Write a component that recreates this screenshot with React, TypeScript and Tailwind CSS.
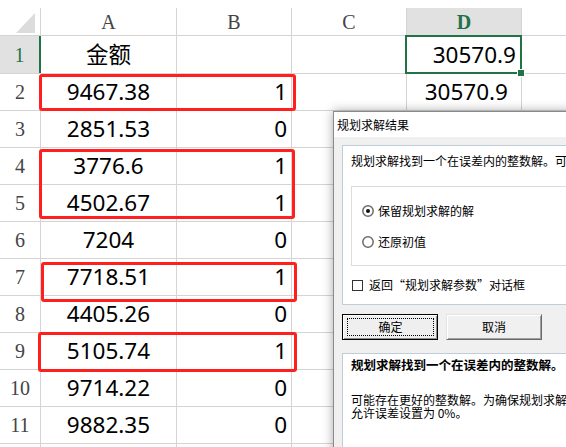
import React from "react";

type Row = { n: number; a: string; b: string; d?: string };

const rows: Row[] = [
  { n: 1, a: "金额", b: "", d: "30570.9" },
  { n: 2, a: "9467.38", b: "1", d: "30570.9" },
  { n: 3, a: "2851.53", b: "0" },
  { n: 4, a: "3776.6", b: "1" },
  { n: 5, a: "4502.67", b: "1" },
  { n: 6, a: "7204", b: "0" },
  { n: 7, a: "7718.51", b: "1" },
  { n: 8, a: "4405.26", b: "0" },
  { n: 9, a: "5105.74", b: "1" },
  { n: 10, a: "9714.22", b: "0" },
  { n: 11, a: "9882.35", b: "0" },
];

// red highlight boxes drawn over the sheet
const marks = [
  { id: 1, cls: "left-[39px] top-[74px] w-[257px] h-[37px]" },
  { id: 2, cls: "left-[39px] top-[149px] w-[256px] h-[70px]" },
  { id: 3, cls: "left-[41px] top-[262px] w-[256px] h-[40px]" },
  { id: 4, cls: "left-[38px] top-[332px] w-[259px] h-[40px]" },
];

function Radio({ checked }: { checked?: boolean }) {
  return (
    <svg width="12" height="12" viewBox="0 0 12 12" className="shrink-0">
      <circle cx="6" cy="6" r="5.2" fill="#fff" stroke="#6b6b6b" strokeWidth="1.5" />
      {checked && <circle cx="6" cy="6" r="2" fill="#111" />}
    </svg>
  );
}

function SheetRow({ row }: { row: Row }) {
  const first = row.n === 1;
  return (
    <div className={`flex border-b border-[#d4d4d4] ${first ? "h-[38px]" : "h-[37px]"}`}>
      <div
        className={`w-[41px] shrink-0 flex items-center justify-center font-['Liberation_Serif','DejaVu_Serif',serif] text-[20px] ${
          first
            ? "bg-[#e1e1e1] text-[#217346] border-r-2 border-[#217346]"
            : "text-[#444] border-r border-[#d4d4d4]"
        }`}
      >
        {row.n}
      </div>
      <div className="w-[136px] shrink-0 flex items-center justify-center border-r border-[#d4d4d4]">
        {row.a}
      </div>
      <div className="w-[115px] shrink-0 flex items-center justify-end pr-[4px] border-r border-[#d4d4d4]">
        {row.b}
      </div>
      <div className="w-[115px] shrink-0 border-r border-[#d4d4d4]" />
      <div
        className={`w-[115px] shrink-0 flex items-center justify-end border-r border-[#d4d4d4] ${
          first ? "pr-[5px]" : "pr-[13px]"
        }`}
      >
        {row.d}
      </div>
      <div className="flex-1" />
    </div>
  );
}

export default function App() {
  return (
    <div className="relative w-[566px] h-[447px] overflow-hidden bg-white text-black font-['Noto_Sans','Noto_Sans_CJK_SC',sans-serif] text-[22.5px]">
      <div className="h-[8px]" />

      {/* Column headers */}
      <div className="flex h-[28px] border-b border-[#d4d4d4] font-['Liberation_Serif','DejaVu_Serif',serif] text-[20px] text-[#444]">
        <div className="w-[41px] shrink-0 border-r border-[#d4d4d4] flex items-end justify-end pr-[5px] pb-[2px]">
          <svg width="19" height="20" viewBox="0 0 19 20">
            <polygon points="0,20 19,20 19,0" fill="#dcdcdc" />
          </svg>
        </div>
        <div className="w-[136px] shrink-0 border-r border-[#d4d4d4] flex items-center justify-center">A</div>
        <div className="w-[115px] shrink-0 border-r border-[#d4d4d4] flex items-center justify-center">B</div>
        <div className="w-[115px] shrink-0 border-r border-[#d4d4d4] flex items-center justify-center">C</div>
        <div className="w-[115px] shrink-0 border-r border-[#d4d4d4] flex items-center justify-center bg-[#e1e1e1] text-[#217346] font-bold">
          D
        </div>
        <div className="flex-1" />
      </div>

      {rows.map((r) => (
        <SheetRow key={r.n} row={r} />
      ))}

      {/* next row, only its grid lines show */}
      <div className="flex h-[37px]">
        <div className="w-[41px] shrink-0 border-r border-[#d4d4d4]" />
        <div className="w-[136px] shrink-0 border-r border-[#d4d4d4]" />
        <div className="w-[115px] shrink-0 border-r border-[#d4d4d4]" />
        <div className="w-[115px] shrink-0 border-r border-[#d4d4d4]" />
        <div className="w-[115px] shrink-0 border-r border-[#d4d4d4]" />
      </div>

      {/* Active cell D1 */}
      <div className="absolute left-[405px] top-[35px] w-[117px] h-[39px] border-2 border-[#217346]" />
      <div className="absolute left-[517px] top-[69px] w-[8px] h-[8px] bg-[#217346] border border-white" />

      {marks.map((m) => (
        <div key={m.id} className={`absolute ${m.cls} border-[3px] border-[#ff1f1f] rounded-[3px]`} />
      ))}

      {/* Solver result dialog */}
      <div className="absolute left-[333px] top-[111px] w-[280px] h-[360px] border border-[#8a8a8a] bg-[#f0f0f0] shadow-[0_0_10px_rgba(0,0,0,0.35)] overflow-hidden whitespace-nowrap font-['Noto_Sans_CJK_SC',sans-serif] text-[12px] text-black">
        <div className="h-[25px] bg-white pl-[3px] leading-[25px]">规划求解结果</div>

        <div className="pl-[8px] pt-[8px]">
          <div className="border border-[#bfcddb] bg-white pl-[8px] pt-[7px] pb-[11px]">
            <div className="leading-[16px]">规划求解找到一个在误差内的整数解。可能存在更好的整数解。</div>

            <div className="mt-[17px] h-[80px] border border-[#dcdcdc] pl-[10px] pt-[16px] flex flex-col gap-[15px]">
              <div className="flex items-center gap-[4px] h-[16px]">
                <Radio checked />
                <span>保留规划求解的解</span>
              </div>
              <div className="flex items-center gap-[4px] h-[16px]">
                <Radio />
                <span>还原初值</span>
              </div>
            </div>

            <div className="mt-[11px] h-[16px] flex items-center gap-[6px] pl-[1px]">
              <div className="w-[11px] h-[11px] border border-[#333] bg-white shrink-0" />
              <span>返回“规划求解参数”对话框</span>
            </div>
          </div>

          <div className="mt-[9px] flex gap-[8px]">
            <div className="w-[96px] h-[26px] border border-black bg-[#efefef] shadow-[inset_1px_1px_0_#fff,inset_-1px_-1px_0_#8c8c8c] pl-[4px] pr-[3px] py-[3px]">
              <div className="w-full h-full border border-dotted border-black flex items-center justify-center">
                确定
              </div>
            </div>
            <div className="w-[96px] h-[26px] border border-t-[#e3e3e3] border-l-[#e3e3e3] border-r-[#696969] border-b-[#696969] bg-[#f0f0f0] shadow-[inset_1px_1px_0_#fff,inset_-1px_-1px_0_#a0a0a0] flex items-center justify-center">
              取消
            </div>
          </div>

          <div className="mt-[13px] h-[120px] border border-[#bfcddb] bg-white pl-[8px] pt-[3px]">
            <div className="leading-[16px] font-bold text-[12.5px]">规划求解找到一个在误差内的整数解。</div>
            <div className="mt-[20px] leading-[13px]">可能存在更好的整数解。为确保规划求解找到最优解，</div>
            <div className="leading-[13px]">允许误差设置为 0%。</div>
          </div>
        </div>
      </div>
    </div>
  );
}
